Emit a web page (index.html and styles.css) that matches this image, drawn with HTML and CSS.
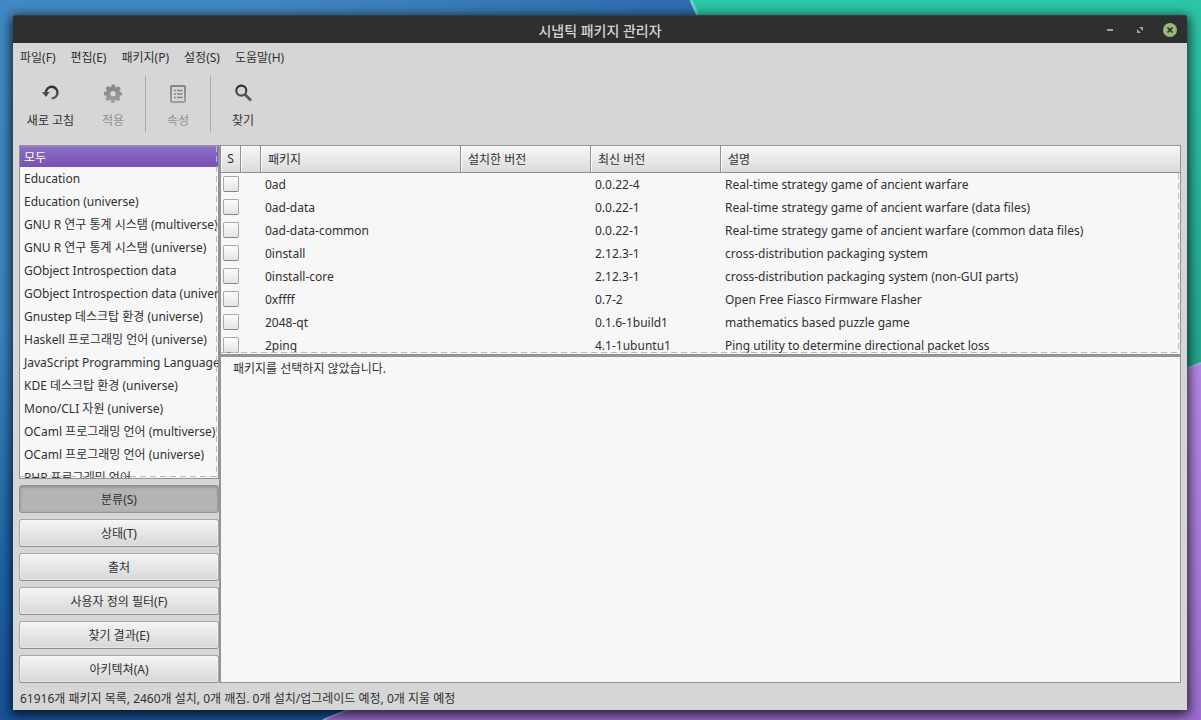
FILE: index.html
```html
<!DOCTYPE html>
<html lang="ko">
<head>
<meta charset="utf-8">
<meta name="viewport" content="width=device-width, initial-scale=1">
<title>시냅틱 패키지 관리자</title>
<link rel="stylesheet" href="styles.css">
</head>
<body>
<svg class="wallpaper" viewBox="0 0 1201 720" preserveAspectRatio="none" aria-hidden="true">
  <defs>
    <linearGradient id="blue" x1="0" y1="0" x2="0" y2="1"><stop offset="0" stop-color="#4289c3"/><stop offset=".45" stop-color="#3d84bf"/><stop offset=".8" stop-color="#1f62a8"/><stop offset="1" stop-color="#185298"/></linearGradient>
    <linearGradient id="shade" x1="0" y1="0" x2="1" y2="0"><stop offset=".2" stop-color="#2d6cae" stop-opacity="0"/><stop offset=".58" stop-color="#2d6cae"/></linearGradient>
    <linearGradient id="green" x1="0" y1="0" x2="0" y2="1"><stop offset="0" stop-color="#2cc5a7"/><stop offset="1" stop-color="#1f9c84"/></linearGradient>
    <linearGradient id="purple" x1="0" y1="0" x2="0" y2="1"><stop offset="0" stop-color="#b387e8"/><stop offset="1" stop-color="#9a6fd0"/></linearGradient>
    <linearGradient id="dim" x1="0" y1="0" x2="0" y2="20" gradientUnits="userSpaceOnUse"><stop offset="0" stop-color="#808080"/><stop offset="1" stop-color="#a0a0a0"/></linearGradient>
    <linearGradient id="ink" x1="0" y1="0" x2="0" y2="20" gradientUnits="userSpaceOnUse"><stop offset="0" stop-color="#222"/><stop offset="1" stop-color="#6a6a6a"/></linearGradient>
  </defs>
  <rect width="1201" height="720" fill="url(#blue)"/>
  <rect width="1201" height="300" fill="url(#shade)"/>
  <path d="M691 0H1201V364L900 480Z" fill="url(#green)"/>
  <path d="M691 0L900 480" stroke="#63d9c4" stroke-width="3"/>
  <path d="M323 720L1201 363V720Z" fill="url(#purple)"/>
  <path d="M323 720L1201 363" stroke="#a9a6e4" stroke-width="2"/>
</svg>
<main class="window">
  <header class="titlebar">
    <h1>시냅틱 패키지 관리자</h1>
    <div class="controls">
      <button aria-label="최소화"><svg width="14" height="14"><path d="M4 6h6v2H4z" fill="#a3a3a3"/></svg></button>
      <button aria-label="최대화"><svg width="14" height="14"><path d="M6 4h4v4zM4 6v4h4z" fill="#a3a3a3"/></svg></button>
      <button aria-label="닫기"><svg width="14" height="14"><circle cx="7" cy="7" r="7" fill="#9ab87c"/><path d="M4.5 4.5l5 5m0-5l-5 5" stroke="#2f2f2f" stroke-width="1.7"/></svg></button>
    </div>
  </header>
  <nav class="menubar">
    <button>파일(F)</button><button>편집(E)</button><button>패키지(P)</button><button>설정(S)</button><button>도움말(H)</button>
  </nav>
  <div class="toolbar">
    <button class="tool"><svg width="20" height="20" viewBox="0 0 20 20"><path d="M4.9 9.3A5.8 5.8 0 1 1 10.7 15.4" fill="none" stroke="url(#ink)" stroke-width="2.4"/><path d="M1 9h7.6L5 14z" fill="#484848"/></svg>새로 고침</button>
    <button class="tool" disabled><svg width="20" height="20" viewBox="0 0 20 20"><g fill="none" stroke="url(#dim)"><circle cx="10" cy="10.7" r="7.9" stroke-width="2.4" stroke-dasharray="3.6 2.6" stroke-dashoffset="1.8"/><circle cx="10" cy="10.7" r="5" stroke-width="4.6"/></g></svg>적용</button>
    <span class="divider"></span>
    <button class="tool" disabled><svg width="20" height="20" viewBox="0 0 20 20"><g fill="none" stroke="url(#dim)"><rect x="3" y="3" width="14" height="16" rx="1" stroke-width="2"/><path d="M6 7.5h2m1 0h5.5M6 11h2m1 0h5.5M6 14.5h2m1 0h5.5" stroke="#858585" stroke-width="1.5"/></g></svg>속성</button>
    <span class="divider"></span>
    <button class="tool"><svg width="20" height="20" viewBox="0 0 20 20"><circle cx="8.3" cy="7.6" r="5" fill="none" stroke="url(#ink)" stroke-width="2.1"/><path d="M12 11.6l6 6" stroke="#585858" stroke-width="2.8"/></svg>찾기</button>
  </div>
  <div class="content">
    <aside class="sidebar">
      <ul class="categories">
        <li class="selected">모두</li><li>Education</li><li>Education (universe)</li><li>GNU R 연구 통계 시스탬 (multiverse)</li><li>GNU R 연구 통계 시스탬 (universe)</li><li>GObject Introspection data</li><li>GObject Introspection data (universe)</li><li>Gnustep 데스크탑 환경 (universe)</li><li>Haskell 프로그래밍 언어 (universe)</li><li>JavaScript Programming Language</li><li>KDE 데스크탑 환경 (universe)</li><li>Mono/CLI 자원 (universe)</li><li>OCaml 프로그래밍 언어 (multiverse)</li><li>OCaml 프로그래밍 언어 (universe)</li><li>PHP 프로그래밍 언어</li>
      </ul>
      <div class="filters">
        <button class="active">분류(S)</button><button>상태(T)</button><button>출처</button><button>사용자 정의 필터(F)</button><button>찾기 결과(E)</button><button>아키텍쳐(A)</button>
      </div>
    </aside>
    <section class="main">
      <div class="packages">
        <table>
          <colgroup><col class="c-state"><col class="c-state"><col class="c-name"><col class="c-version"><col class="c-version"><col></colgroup>
          <thead><tr><th class="state">S</th><th></th><th>패키지</th><th>설치한 버전</th><th>최신 버전</th><th>설명</th></tr></thead>
          <tbody>
            <tr><td class="state"><input type="checkbox" aria-label="0ad"></td><td></td><td>0ad</td><td></td><td>0.0.22-4</td><td>Real-time strategy game of ancient warfare</td></tr>
            <tr><td class="state"><input type="checkbox" aria-label="0ad-data"></td><td></td><td>0ad-data</td><td></td><td>0.0.22-1</td><td>Real-time strategy game of ancient warfare (data files)</td></tr>
            <tr><td class="state"><input type="checkbox" aria-label="0ad-data-common"></td><td></td><td>0ad-data-common</td><td></td><td>0.0.22-1</td><td>Real-time strategy game of ancient warfare (common data files)</td></tr>
            <tr><td class="state"><input type="checkbox" aria-label="0install"></td><td></td><td>0install</td><td></td><td>2.12.3-1</td><td>cross-distribution packaging system</td></tr>
            <tr><td class="state"><input type="checkbox" aria-label="0install-core"></td><td></td><td>0install-core</td><td></td><td>2.12.3-1</td><td>cross-distribution packaging system (non-GUI parts)</td></tr>
            <tr><td class="state"><input type="checkbox" aria-label="0xffff"></td><td></td><td>0xffff</td><td></td><td>0.7-2</td><td>Open Free Fiasco Firmware Flasher</td></tr>
            <tr><td class="state"><input type="checkbox" aria-label="2048-qt"></td><td></td><td>2048-qt</td><td></td><td>0.1.6-1build1</td><td>mathematics based puzzle game</td></tr>
            <tr><td class="state"><input type="checkbox" aria-label="2ping"></td><td></td><td>2ping</td><td></td><td>4.1-1ubuntu1</td><td>Ping utility to determine directional packet loss</td></tr>
          </tbody>
        </table>
      </div>
      <div class="details">패키지를 선택하지 않았습니다.</div>
    </section>
  </div>
  <footer class="statusbar">61916개 패키지 목록, 2460개 설치, 0개 깨짐. 0개 설치/업그레이드 예정, 0개 지울 예정</footer>
</main>
</body>
</html>
```
FILE: styles.css
```css
* { box-sizing: border-box; }

body {
  margin: 0;
  height: 100vh;
  padding: 15px 14px 10px 13px;
  overflow: hidden;
  background: #2d6cae;
  color: #303030;
  font: 12px/16px "Noto Sans", "Noto Sans CJK KR", sans-serif;
}

button {
  margin: 0;
  padding: 0;
  border: 0;
  background: none;
  color: inherit;
  font: inherit;
}

.wallpaper {
  position: absolute;
  inset: 0;
  width: 100%;
  height: 100%;
}

.window {
  position: relative;
  height: 100%;
  display: flex;
  flex-direction: column;
  background: #d6d6d6;
  border-radius: 2px 2px 0 0;
  box-shadow: 0 3px 12px 2px rgba(0, 0, 0, .75);
}

.titlebar {
  flex: none;
  height: 28px;
  display: grid;
  grid-template-columns: 1fr auto 1fr;
  align-items: center;
  background: #2f2f2f;
  border-top: 1px solid #3a3a3a;
  border-radius: 2px 2px 0 0;
}

.titlebar h1 {
  grid-column: 2;
  margin: 0;
  color: #d3d3d3;
  font-size: 14px;
  font-weight: 500;
  line-height: 20px;
  padding-top: 2px;
}

.controls {
  justify-self: end;
  display: flex;
  gap: 16px;
  padding-right: 10px;
}

.controls button { height: 14px; }

svg { display: block; }

.menubar {
  flex: none;
  height: 28px;
  display: flex;
  align-items: center;
  gap: 15px;
  padding: 1px 7px 0;
}

.toolbar {
  flex: none;
  height: 74px;
  display: flex;
  align-items: flex-start;
  padding: 5px 7px;
}

.tool {
  min-width: 64px;
  height: 56px;
  display: flex;
  flex-direction: column;
  align-items: center;
  gap: 10px;
  padding-top: 7px;
}

.tool:first-child { min-width: 61px; }

.tool:disabled { color: #909090; }

.divider {
  width: 1px;
  height: 56px;
  background: #aaa;
}

.content {
  flex: 1;
  min-height: 0;
  display: flex;
  padding: 0 6px;
}

.sidebar {
  flex: none;
  width: 200px;
  display: flex;
  flex-direction: column;
  gap: 6px;
}

.categories {
  position: relative;
  flex: 1;
  min-height: 0;
  overflow: hidden;
  margin: 0;
  padding: 0;
  list-style: none;
  background: #f7f7f7;
  border: 1px solid #919191;
}

.categories::after,
.packages::after {
  content: "";
  position: absolute;
  inset: 0 1px 1px 0;
  background:
    repeating-linear-gradient(#bbb 0 6px, transparent 6px 10px) right / 1px 100% no-repeat,
    repeating-linear-gradient(90deg, #bbb 0 6px, transparent 6px 10px) bottom / 100% 1px no-repeat;
  pointer-events: none;
}

.packages::after { top: 27px; }

.categories li {
  height: 23px;
  padding-left: 4px;
  line-height: 23px;
  white-space: nowrap;
}

.categories .selected {
  height: 21px;
  line-height: 21px;
  color: #fff;
  background: linear-gradient(#8c6cc6, #7653b2);
  border-top: 1px solid #9b7dcc;
}

.filters {
  flex: none;
  display: flex;
  flex-direction: column;
  gap: 6px;
}

.filters button {
  height: 28px;
  padding-top: 1px;
  border: 1px solid #a6a6a6;
  border-bottom-color: #8f8f8f;
  border-radius: 3px;
  background: linear-gradient(#f4f4f4, #d7d7d7);
  box-shadow: inset 0 0 0 1px rgba(255, 255, 255, .4);
}

.filters .active {
  background: #b4b4b4;
  border-color: #929292;
  box-shadow: inset 0 1px 3px rgba(0, 0, 0, .25);
}

.main {
  flex: 1;
  min-width: 0;
  display: flex;
  flex-direction: column;
  border: 1px solid #919191;
  border-left: 2px solid #949494;
}

.packages {
  position: relative;
  flex: none;
  height: 208px;
  overflow: hidden;
  background: #f7f7f7;
}

table {
  width: 100%;
  table-layout: fixed;
  border-collapse: separate;
  border-spacing: 0;
}

.c-state { width: 20px; }
.c-name { width: 200px; }
.c-version { width: 130px; }

th {
  height: 27px;
  padding: 1px 7px 0;
  text-align: left;
  font-weight: 400;
  border-right: 1px solid #919191;
  border-bottom: 1px solid #919191;
  background: linear-gradient(#f8f8f8, #dadada);
  box-shadow: inset 1px 1px 0 #fafafa;
}

th:last-child { border-right: 0; }

td {
  height: 23px;
  padding: 0 4px;
  white-space: nowrap;
}

th.state { padding: 0; text-align: center; }

td.state { padding: 0 2px 1px; }

input[type="checkbox"] {
  appearance: none;
  display: block;
  width: 16px;
  height: 16px;
  margin: 0;
  border: 1px solid #a8a8a8;
  border-bottom-color: #858585;
  border-radius: 2px;
  background: linear-gradient(#fcfcfc, #e4e4e4);
}

.details {
  flex: 1;
  padding: 4px 12px;
  background: #f7f7f7;
  border-top: 3px solid #949494;
}

.statusbar {
  flex: none;
  padding: 8px 7px 3px;
}
```
